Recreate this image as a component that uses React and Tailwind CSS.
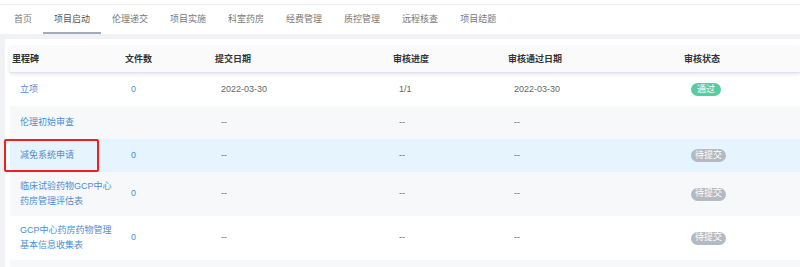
import React from "react";

const tabs = ["首页", "项目启动", "伦理递交", "项目实施", "科室药房", "经费管理", "质控管理", "远程核查", "项目结题"];

const rows = [
  { name: ["立项"], files: "0", submit: "2022-03-30", prog: "1/1", pass: "2022-03-30", status: "pass", h: "h-[33px]", bg: "bg-white" },
  { name: ["伦理初始审查"], files: "", submit: "--", prog: "--", pass: "--", status: "", h: "h-[33px]", bg: "bg-[#f7f8fa]" },
  { name: ["减免系统申请"], files: "0", submit: "--", prog: "--", pass: "--", status: "wait", h: "h-[33px]", bg: "bg-[#e5f4fd]", mark: true },
  { name: ["临床试验药物GCP中心", "药房管理评估表"], files: "0", submit: "--", prog: "--", pass: "--", status: "wait", h: "h-[44px]", bg: "bg-[#f7f8fa]" },
  { name: ["GCP中心药房药物管理", "基本信息收集表"], files: "0", submit: "--", prog: "--", pass: "--", status: "wait", h: "h-[44px]", bg: "bg-white" },
];

const cols = "grid grid-cols-[113px_90px_178px_115px_176px_1fr]";

export default function App() {
  return (
    <div className="w-[800px] h-[267px] overflow-hidden bg-[#f0f2f5] text-[9px]" style={{ fontFamily: '"Liberation Sans", "Noto Sans CJK SC", sans-serif' }}>
      <div className="h-[5px] bg-white border-b border-[#ebedf0]" />
      <div className="h-[29px] bg-white flex pl-[3px]">
        {tabs.map((t, i) => (
          <div key={t} className={`relative px-[11px] flex items-center h-full ${i === 1 ? "text-[#555]" : "text-[#777]"}`}>
            {t}
            {i === 1 && <div className="absolute left-0 right-0 bottom-0 h-[2px] bg-[#a3acb8]" />}
          </div>
        ))}
      </div>
      <div className="mt-[5px] ml-[5px] bg-white h-[300px] pt-[8px] pl-[5px]">
        <div className={`${cols} h-[26px] items-center bg-[#fafafa] border-b border-[#dfe3ea] shadow-[0_1px_4px_rgba(0,0,0,0.12)] font-bold text-[#333] relative z-10`}>
          <div className="pl-[2px]">里程碑</div>
          <div className="pl-[2px]">文件数</div>
          <div className="pl-[2px]">提交日期</div>
          <div className="pl-[2px]">审核进度</div>
          <div className="pl-[2px]">审核通过日期</div>
          <div className="pl-[2px]">审核状态</div>
        </div>
        {rows.map((r, i) => (
          <div key={i} className={`${cols} ${r.h} ${r.bg} items-center text-[#666] relative`}>
            <div className="pl-[10px] text-[#4a8fd6] leading-[15px]">
              {r.name.map((n) => (
                <div key={n}>{n}</div>
              ))}
            </div>
            <div className="pl-[8px] text-[#4a8fd6]">{r.files}</div>
            <div className="pl-[8px]">{r.submit}</div>
            <div className="pl-[8px]">{r.prog}</div>
            <div className="pl-[8px]">{r.pass}</div>
            <div className="pl-[9px]">
              {r.status === "pass" && (
                <span className="inline-flex items-center justify-center h-[13px] px-[6px] rounded-full bg-[#5bcaa0] text-white">通过</span>
              )}
              {r.status === "wait" && (
                <span className="inline-flex items-center justify-center h-[13px] px-[4px] rounded-full bg-[#b3bac2] text-white">待提交</span>
              )}
            </div>
            {r.mark && (
              <div className="absolute left-[-6px] top-0 w-[95px] h-[33px] border-2 border-[#f02020] rounded-[2px]" />
            )}
          </div>
        ))}
        <div className="h-[20px] bg-[#f7f8fa]" />
      </div>
    </div>
  );
}
